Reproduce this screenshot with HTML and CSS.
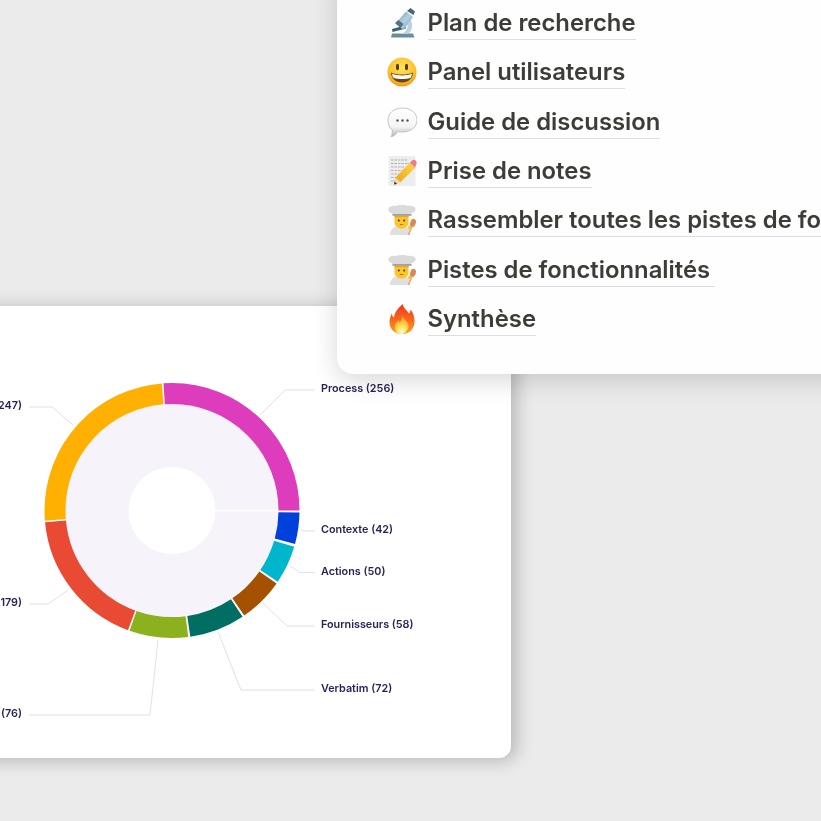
FILE: index.html
```html
<!DOCTYPE html>
<html lang="fr">
<head>
<meta charset="utf-8">
<title>Recherche utilisateur</title>
<link rel="stylesheet" href="styles.css">
</head>
<body>
<main class="stage">
  <section class="window chart-card">
    <svg class="donut" viewBox="0 306 511 452" width="511" height="452">
      <circle class="disc" cx="172" cy="510.5" r="106.5"/>
      <line class="split" x1="210" y1="510.5" x2="279" y2="510.5"/>
      <circle class="hole" cx="172" cy="510.5" r="43.5"/>
      <g class="ring">
        <circle cx="172" cy="510.5" r="117" pathLength="980" stroke="#0041dc" stroke-dasharray="39 941" stroke-dashoffset="-2.5"/>
        <circle cx="172" cy="510.5" r="117" pathLength="980" stroke="#00b6cc" stroke-dasharray="47.5 932.5" stroke-dashoffset="-45"/>
        <circle cx="172" cy="510.5" r="117" pathLength="980" stroke="#a55200" stroke-dasharray="56 924" stroke-dashoffset="-95"/>
        <circle cx="172" cy="510.5" r="117" pathLength="980" stroke="#006e63" stroke-dasharray="69 911" stroke-dashoffset="-153.500"/>
        <circle cx="172" cy="510.5" r="117" pathLength="980" stroke="#8bb21e" stroke-dasharray="73 907" stroke-dashoffset="-225"/>
        <circle cx="172" cy="510.5" r="117" pathLength="980" stroke="#e84a33" stroke-dasharray="175.500 804.500" stroke-dashoffset="-300"/>
        <circle cx="172" cy="510.5" r="117" pathLength="980" stroke="#ffb000" stroke-dasharray="245 735" stroke-dashoffset="-477.500"/>
        <circle cx="172" cy="510.5" r="117" pathLength="980" stroke="#dd3cbc" stroke-dasharray="255.500 724.500" stroke-dashoffset="-724.500"/>
      </g>
      <g class="leaders">
        <polyline points="260,415 285,390 315,390"/>
        <polyline points="301,530 306,531 315,531"/>
        <polyline points="290,566 300,572.500 315,572.500"/>
        <polyline points="263,603 287,626 315,626"/>
        <polyline points="218,632 241,690 315,690"/>
        <polyline points="158,640 150,715 29,715"/>
        <polyline points="68,590 48,604 29,604"/>
        <polyline points="73,425 52,407 29,407"/>
      </g>
      <g class="labels">
        <text x="321" y="392">Process (256)</text>
        <text x="321" y="532.500">Contexte (42)</text>
        <text x="321" y="575">Actions (50)</text>
        <text x="321" y="628">Fournisseurs (58)</text>
        <text x="321" y="692">Verbatim (72)</text>
        <text class="end" x="22" y="717">Outils (76)</text>
        <text class="end" x="22" y="606">Idées (179)</text>
        <text class="end" x="22" y="409">Besoins (247)</text>
      </g>
    </svg>
  </section>

  <section class="window list-card">
    <svg class="defs" width="0" height="0" aria-hidden="true">
      <defs>
        <linearGradient id="g-scope" x1="0" y1="0" x2="1" y2="1"><stop offset="0" stop-color="#6f93aa"/><stop offset=".5" stop-color="#b4cfdf"/><stop offset="1" stop-color="#7c9cb2"/></linearGradient>
        <radialGradient id="g-smile" cx=".5" cy=".35" r=".7"><stop offset="0" stop-color="#ffe35a"/><stop offset=".65" stop-color="#fdc02e"/><stop offset="1" stop-color="#f08a12"/></radialGradient>
        <linearGradient id="g-bubble" x1="0" y1="0" x2="0" y2="1"><stop offset="0" stop-color="#ffffff"/><stop offset=".65" stop-color="#f4f4f4"/><stop offset="1" stop-color="#b4b4b4"/></linearGradient>
        <linearGradient id="g-pencil" x1="0" y1="1" x2="1" y2="0"><stop offset="0" stop-color="#e8a214"/><stop offset="1" stop-color="#ffd84a"/></linearGradient>
        <linearGradient id="g-flame" x1="0" y1="0" x2="0" y2="1"><stop offset="0" stop-color="#ea3a1c"/><stop offset=".55" stop-color="#fa6a1c"/><stop offset="1" stop-color="#ffa01e"/></linearGradient>
        <radialGradient id="g-core" cx=".5" cy=".9" r=".8"><stop offset="0" stop-color="#fffbe6"/><stop offset=".4" stop-color="#ffe45a"/><stop offset="1" stop-color="#ff9a1e"/></radialGradient>
        <symbol id="cook" viewBox="0 0 30 30">
          <path d="M3 30c0-6 4-8 7-9h8c3 1 5 3 5 9z" fill="#dfdfdf"/>
          <path d="M7.500 9h14v8c0 4-3 6.500-7 6.500s-7-2.500-7-6.500z" fill="#fdc42c"/>
          <path d="M7.500 9h14v3.500c-4-.8-10-.8-14 0z" fill="#e9a81e"/>
          <circle cx="11.800" cy="15.500" r="1" fill="#4a3410"/><circle cx="17.200" cy="15.500" r="1" fill="#4a3410"/>
          <path d="M12.800 19.500h3.400" stroke="#b8791a" stroke-width="1" fill="none"/>
          <path d="M5.500 10.500V8.500C2 7.500 1 5.500 1.500 3.700 2.500 1 6 .5 9 1c3-1.200 9-1.200 12 0 3-.5 7 0 7.500 2.700.5 2-1 3.800-4.500 4.800v2z" fill="#dadada"/>
          <path d="M5.500 9h19v1.800h-19z" fill="#a2a2a2"/>
          <path d="M21.500 30l3.500-9" stroke="#e8a878" stroke-width="1.600"/>
          <ellipse cx="26" cy="18" rx="2.800" ry="4.200" transform="rotate(18 26 18)" fill="#d98a52"/>
          <circle cx="23" cy="22.500" r="2" fill="#fcc22c"/>
        </symbol>
      </defs>
    </svg>
    <ul class="rows">
      <li class="row">
        <svg class="emoji" viewBox="0 0 30 30"><path d="M5 25.500h21l1.500 4H4z" fill="#6d8ba0"/><path d="M17 8c6.500 1 9 6 8 11.500s-4 6.500-8 6.500H12c6-1 8.500-4 8.500-8s-1.500-6-5.500-7z" fill="#bcd4e2"/><path d="M5 21l13-3.500 1 3-13.500 3.500z" fill="#3f5f76"/><path d="M8.500 15.500L19 3.500l7 5.500-9.500 13z" fill="url(#g-scope)"/><path d="M20 3l3.500-3 4.500 3.500-1.500 3.500z" fill="#46697f"/><path d="M8 15l3.500-3 5 4-3 4z" fill="#527488"/></svg>
        <span class="title">Plan de recherche</span>
      </li>
      <li class="row">
        <svg class="emoji" viewBox="0 0 30 30"><circle cx="15" cy="15" r="14.500" fill="url(#g-smile)"/><ellipse cx="10.500" cy="10" rx="1.500" ry="3.200" fill="#4f3614"/><ellipse cx="19.500" cy="10" rx="1.500" ry="3.200" fill="#4f3614"/><path d="M4 15.500c3 1.500 7 2 11 2s8-.5 11-2c0 6-5 10-11 10s-11-4-11-10z" fill="#6e4316"/><path d="M5 16.800c3 1 6.500 1.700 10 1.700s7-.7 10-1.700c-.3 2-.8 3.200-1.500 4-2.500 1-5.500 1.300-8.500 1.300s-6-.3-8.500-1.300c-.8-.8-1.300-2-1.500-4z" fill="#fff"/></svg>
        <span class="title">Panel utilisateurs</span>
      </li>
      <li class="row">
        <svg class="emoji" viewBox="0 0 30 30"><path d="M15.500 1C23.800 1 30 6 30 13s-6.200 12-14.500 12c-1.500 0-3-.2-4.500-.5C9.500 26.500 7.500 29 4 30c1-2 1.500-4 1.300-7C2 20.500 1 17 1 13 1 6 7.200 1 15.500 1z" fill="url(#g-bubble)" stroke="#bdbdbd" stroke-width=".9"/><circle cx="10.500" cy="13.500" r="1.200" fill="#555"/><circle cx="15.500" cy="13.500" r="1.200" fill="#555"/><circle cx="20.500" cy="13.500" r="1.200" fill="#555"/></svg>
        <span class="title">Guide de discussion</span>
      </li>
      <li class="row">
        <svg class="emoji" viewBox="0 0 30 30"><rect x="1.500" y="0" width="27" height="30" fill="#ededed"/><path d="M4 4h16M4 7.500h20M4 11h14M4 14.500h12M4 18h8M4 21.500h6M4 25h5" stroke="#9a9a9a" stroke-width=".7" stroke-dasharray="2.500 1"/><path d="M7 28.500l1.500-7L23 6.500l5 5.500-15 14.500z" fill="url(#g-pencil)"/><path d="M7 28.500l1.500-7 5.500 5z" fill="#f3d8a8"/><path d="M7 28.500l.6-3 2.400 2.400z" fill="#333"/><path d="M23 6.500l2-2c1.500-1 3-.8 4 .5s1 3-.2 4.300L28 12z" fill="#ec7b8e"/></svg>
        <span class="title">Prise de notes</span>
      </li>
      <li class="row">
        <svg class="emoji"><use href="#cook"/></svg>
        <span class="title">Rassembler toutes les pistes de fonctionnalités</span>
      </li>
      <li class="row">
        <svg class="emoji"><use href="#cook"/></svg>
        <span class="title title-wide">Pistes de fonctionnalités</span>
      </li>
      <li class="row">
        <svg class="emoji" viewBox="0 0 30 30"><path d="M15.500 0c1 4 4 6 6.500 9.500 1-1 1.500-2.500 1.500-4 3 3.500 4 8 4 12 0 7-5 12.500-12.500 12.500S2.500 25 2.500 18c0-3 1-6 2.500-9 0 2 .5 3.500 2 4.500C7.500 8 11 4.500 15.500 0z" fill="url(#g-flame)"/><path d="M15 11c.5 3 5 5.500 6.500 9.500 1 4-2.500 9.500-7 9.500S7 26 8 21c.7-2.500 3-3.500 3.500-5 .8 1 1 2 1 3 1.500-2 2.500-4.500 2.500-8z" fill="url(#g-core)"/></svg>
        <span class="title">Synthèse</span>
      </li>
    </ul>
  </section>
</main>
</body>
</html>
```

FILE: styles.css
```css
* { box-sizing: border-box; }

html, body {
  margin: 0;
  padding: 0;
  background: #ebebeb;
}

.stage {
  position: relative;
  width: 821px;
  height: 821px;
  overflow: hidden;
  background: #ebebeb;
  filter: blur(0.3px);
}

.window {
  position: absolute;
  background: #fff;
}

.chart-card {
  left: -40px;
  top: 306px;
  width: 551px;
  height: 452px;
  padding-left: 40px;
  border-radius: 12px;
  box-shadow: 5px 2px 18px rgba(0, 0, 0, 0.24);
}

.donut {
  display: block;
  overflow: visible;
}

.disc { fill: #f6f4fa; }
.hole { fill: #fff; }
.split { stroke: #fff; stroke-width: 1.5; }

.ring circle {
  fill: none;
  stroke-width: 21;
}

.leaders polyline {
  fill: none;
  stroke: #e0e0e9;
  stroke-width: 1;
}

.labels text {
  font-family: Inter, "Liberation Sans", sans-serif;
  font-size: 10.8px;
  font-weight: 600;
  fill: #2c2157;
}

.labels .end { text-anchor: end; }

.list-card {
  left: 337px;
  top: -30px;
  width: 560px;
  height: 404px;
  padding: 36.6px 0 0 50px;
  border-radius: 16px;
  background: #fefefe;
  box-shadow: 0 6px 26px rgba(0, 0, 0, 0.16);
}

.defs {
  position: absolute;
}

.rows {
  list-style: none;
  margin: 0;
  padding: 0;
  display: flex;
  flex-direction: column;
  gap: 16.35px;
}

.row {
  display: flex;
  align-items: center;
  gap: 10.5px;
  height: 33px;
  white-space: nowrap;
}

.emoji {
  flex: none;
  width: 30px;
  height: 30px;
}

.title {
  font-family: Inter, "Liberation Sans", sans-serif;
  font-size: 23.85px;
  font-weight: 570;
  line-height: 33px;
  color: #3d3d38;
  border-bottom: 1.5px solid #dedede;
}

.title-wide {
  padding-right: 5px;
}
```
